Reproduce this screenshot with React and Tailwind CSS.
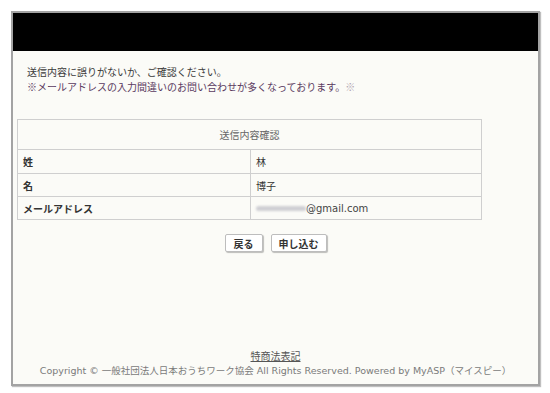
const rows = [
  { label: "姓", value: "林" },
  { label: "名", value: "博子" },
];

export default function App() {
  return (
    <div className="w-[550px] h-[393px] bg-white pt-[11px] pl-[11px] font-['DejaVu_Sans','Noto_Sans_CJK_JP',sans-serif]">
      <div className="w-[529px] h-[375px] border-2 border-[#a3a3a3] bg-[#fbfbf7] flex flex-col shadow-[1px_1px_1px_rgba(0,0,0,0.25)]">
        <div className="h-[38px] bg-black shrink-0" />

        <div className="mt-[13px] pl-[14px] text-[10px] leading-[15px] font-['Noto_Sans_CJK_JP',sans-serif]">
          <p className="text-[#3a3a3a]">送信内容に誤りがないか、ご確認ください。</p>
          <p className="text-[#5a3a60]">
            ※メールアドレスの入力間違いのお問い合わせが多くなっております。
            <span className="text-[#b0a4b0]">※</span>
          </p>
        </div>

        <table className="mt-[25px] ml-[4px] w-[465px] border-collapse text-[10px] text-[#333] font-['Noto_Sans_CJK_JP',sans-serif]">
          <tbody>
            <tr className="h-[30px]">
              <td colSpan={2} className="border border-[#cfcfcf] text-center text-[#666]">
                送信内容確認
              </td>
            </tr>
            {rows.map((r, i) => (
              <tr key={r.label} className={i === 0 ? "h-[24px]" : "h-[23px]"}>
                <td className="w-[233px] border border-[#cfcfcf] pl-[5px] font-bold">{r.label}</td>
                <td className="border border-[#cfcfcf] pl-[5px]">{r.value}</td>
              </tr>
            ))}
            <tr className="h-[23px]">
              <td className="border border-[#cfcfcf] pl-[5px] font-bold">メールアドレス</td>
              <td className="border border-[#cfcfcf] pl-[5px]">
                <div className="flex items-center">
                  <span className="inline-block w-[50px] h-[5px] rounded-full bg-[#cfcfd4] blur-[1px]" />
                  <span className="font-['DejaVu_Sans',sans-serif] text-[#444]">@gmail.com</span>
                </div>
              </td>
            </tr>
          </tbody>
        </table>

        <div className="mt-[14px] flex justify-center gap-[8px] font-['Noto_Sans_CJK_JP',sans-serif] text-[10px] font-bold text-[#333]">
          <button className="w-[38px] h-[18px] bg-white border border-[#bdbdbd] rounded-[2px] shadow-[1px_1px_1px_rgba(0,0,0,0.25)]">戻る</button>
          <button className="w-[56px] h-[18px] bg-white border border-[#bdbdbd] rounded-[2px] shadow-[1px_1px_1px_rgba(0,0,0,0.25)]">申し込む</button>
        </div>

        <div className="mt-auto pb-[6px] flex flex-col items-center leading-[15px]">
          <a href="#" className="underline text-[10px] text-[#555] font-['Noto_Sans_CJK_JP',sans-serif]">特商法表記</a>
          <p className="text-[9.5px] text-[#7a7a7a]">
            Copyright © 一般社団法人日本おうちワーク協会 All Rights Reserved. Powered by MyASP（マイスピー）
          </p>
        </div>
      </div>
    </div>
  );
}
